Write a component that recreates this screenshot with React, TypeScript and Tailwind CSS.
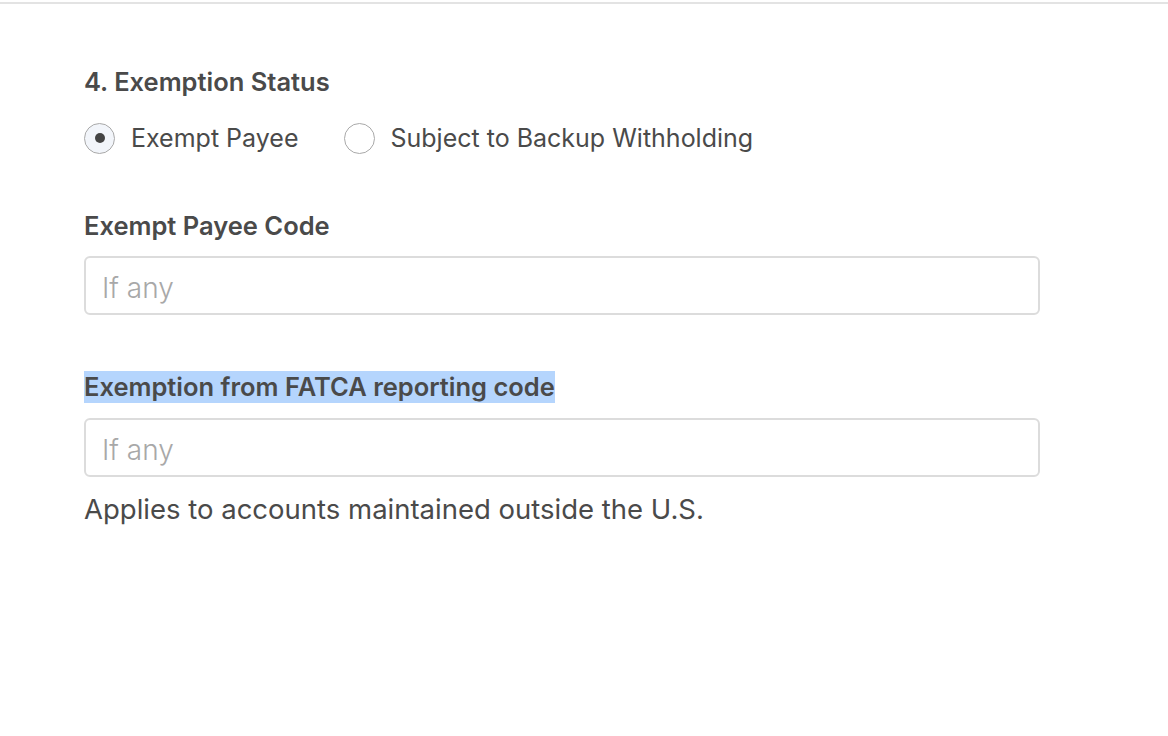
export default function App() {
  return (
    <div className="min-h-screen w-full bg-white font-['Inter','Noto_Sans',sans-serif] text-[#4a4a4a]">
      <div className="pt-[2px]">
        <div className="h-[2px] bg-[#e3e3e3]" />
      </div>
      <div className="pl-[84px] pr-[128px] pt-[62px]">
        <h2 className="text-[25.5px] leading-[32px] font-semibold">4. Exemption Status</h2>

        {/* Radio group */}
        <div className="mt-[24px] flex items-center">
          <label className="flex items-center">
            <span className="flex h-[31px] w-[31px] items-center justify-center rounded-full border-[1.5px] border-[#a9a9a9] bg-[#f2f5fa]">
              <span className="h-[10px] w-[10px] rounded-full bg-[#444]" />
            </span>
            <span className="ml-[16px] text-[25px] leading-[32px]">Exempt Payee</span>
          </label>
          <label className="ml-[46px] flex items-center">
            <span className="h-[31px] w-[31px] rounded-full border-[1.5px] border-[#a9a9a9] bg-white" />
            <span className="ml-[15px] text-[25px] leading-[32px]">Subject to Backup Withholding</span>
          </label>
        </div>

        {/* Exempt payee code */}
        <div className="mt-[56px]">
          <div className="text-[25.5px] leading-[32px] font-semibold">Exempt Payee Code</div>
          <div className="mt-[14px] flex h-[59px] w-[956px] items-center rounded-[6px] border-2 border-[#dcdcdc] px-[16px]">
            <span className="mt-[4px] text-[28px] font-light text-[#a8a8a8]">If any</span>
          </div>
        </div>

        {/* FATCA */}
        <div className="mt-[56px]">
          <div className="inline-block bg-[#b5d5fd] text-[25.5px] leading-[32px] font-semibold">Exemption from FATCA reporting code</div>
          <div className="mt-[15px] flex h-[59px] w-[956px] items-center rounded-[6px] border-2 border-[#dcdcdc] px-[16px]">
            <span className="mt-[4px] text-[28px] font-light text-[#a8a8a8]">If any</span>
          </div>
          <p className="mt-[14px] text-[27.5px] leading-[36px]">Applies to accounts maintained outside the U.S.</p>
        </div>
      </div>
    </div>
  );
}
